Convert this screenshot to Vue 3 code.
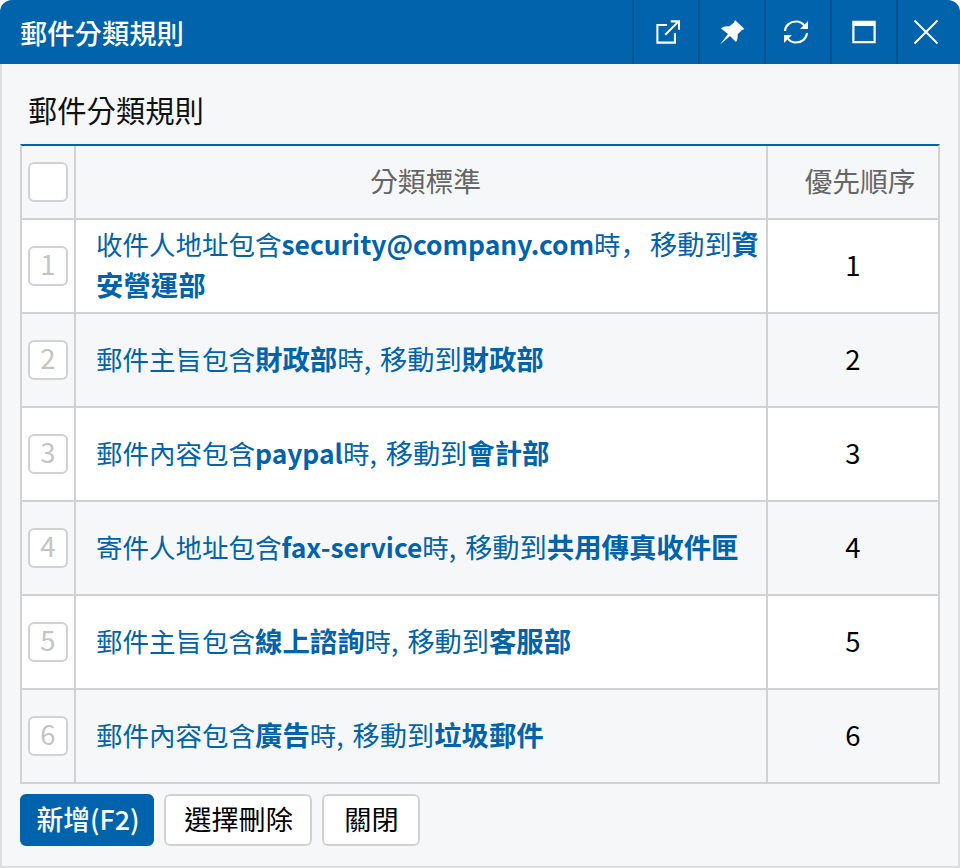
<template>
  <div class="window">
    <header class="titlebar">
      <h1 class="title">郵件分類規則</h1>
      <div class="tools">
        <button class="tool">
          <svg class="nudge-r" viewBox="0 0 26 26" width="24" height="24" fill="none" stroke="#fff" stroke-width="2.2">
            <path d="M12 5.500H1.500v19h19V14" />
            <path d="M10 16 24.500 1.500M16 1.500h9v9" />
          </svg>
        </button>
        <button class="tool">
          <svg viewBox="0 0 26 26" width="26" height="26" fill="#fff">
            <path d="M16 1 25.500 10 23 11 18.500 15.500C19 18 18.500 21 17 23L11 17 1 25.500 9 15 2 9.500C4 8 7 7 10 7.500L15 3.500Z" />
          </svg>
        </button>
        <button class="tool">
          <svg class="nudge-l" viewBox="0 0 26 26" width="26" height="26" fill="none" stroke="#fff" stroke-width="2.2">
            <path d="M2 12C2.500 6.500 7 2.500 13 2.500c3.500 0 6.500 1.500 8.500 4.500" />
            <path d="M24 14c-.5 5.500-5 9.500-11 9.500-3.500 0-6.500-1.500-8.500-4.500" />
            <path d="M25 2v8h-8z" fill="#fff" stroke="none" />
            <path d="M1 24v-8h8z" fill="#fff" stroke="none" />
          </svg>
        </button>
        <button class="tool">
          <svg viewBox="0 0 26 26" width="24" height="24" fill="none" stroke="#fff" stroke-width="2.400">
            <path d="M1.500 2h23v22h-23z" />
            <path d="M1 4.500h24" stroke-width="4" />
          </svg>
        </button>
        <button class="tool last">
          <svg viewBox="0 0 26 26" width="26" height="26" fill="none" stroke="#fff" stroke-width="2">
            <path d="M1.500 1.500 24.500 24.500M24.500 1.500 1.500 24.500" />
          </svg>
        </button>
      </div>
    </header>

    <main class="body">
      <h2 class="heading">郵件分類規則</h2>
      <div class="grid">
        <div class="row head">
          <div class="cell check"><span class="box"></span></div>
          <div class="cell rule">分類標準</div>
          <div class="cell order">優先順序</div>
        </div>
        <div v-for="(r, idx) in rules" :key="idx" class="row" :class="{ odd: idx % 2 === 1 }">
          <div class="cell check"><span class="box">{{ idx + 1 }}</span></div>
          <div class="cell rule">
            <a class="link">{{ r.field }}<b :class="{ latin: r.latin }">{{ r.word }}</b>時<span class="sep" :class="{ full: idx === 0 }">{{ idx === 0 ? '， ' : ', ' }}</span><span class="to">移動到</span><b>{{ r.folder }}</b></a>
          </div>
          <div class="cell order">{{ idx + 1 }}</div>
        </div>
      </div>
      <div class="actions">
        <button class="btn primary">新增(F2)</button>
        <button class="btn">選擇刪除</button>
        <button class="btn">關閉</button>
      </div>
    </main>
  </div>
</template>

<script setup>
const rules = [
  { field: '收件人地址包含', word: 'security@company.com', latin: true, folder: '資安營運部' },
  { field: '郵件主旨包含', word: '財政部', folder: '財政部' },
  { field: '郵件內容包含', word: 'paypal', latin: true, folder: '會計部' },
  { field: '寄件人地址包含', word: 'fax-service', latin: true, folder: '共用傳真收件匣' },
  { field: '郵件主旨包含', word: '線上諮詢', folder: '客服部' },
  { field: '郵件內容包含', word: '廣告', folder: '垃圾郵件' },
]
</script>

<style>
html, body { margin: 0; background: #fff; }
</style>

<style scoped>
.window {
  width: 960px;
  height: 868px;
  box-sizing: border-box;
  display: flex;
  flex-direction: column;
  background: #f6f7f9;
  border-radius: 12px 12px 0 0;
  overflow: hidden;
  font-family: "Noto Sans CJK TC", "Noto Sans", sans-serif;
  font-size: 27.5px;
  color: #000;
}

.titlebar {
  height: 64px;
  flex: none;
  display: flex;
  justify-content: space-between;
  background: #0063ac;
  color: #fff;
}

.title {
  margin: 0;
  padding-left: 20px;
  font-size: 27.3px;
  font-weight: 500;
  line-height: 64px;
}

.tools { display: flex; }

.tool {
  width: 66px;
  height: 64px;
  padding: 0;
  display: flex;
  align-items: center;
  justify-content: center;
  background: none;
  border: 0;
  border-left: 2px solid #00548f;
}

.tool.last { width: 64px; padding-right: 6px; }
.nudge-r { margin-left: 4px; }
.nudge-l { margin-right: 4px; }

.body {
  flex: 1;
  padding: 0 18px;
  border: 2px solid #dcdee0;
  border-top: 0;
  display: flex;
  flex-direction: column;
  box-sizing: border-box;
}

.heading {
  margin: 0;
  height: 80px;
  padding-left: 8px;
  font-size: 29.3px;
  font-weight: 400;
  line-height: 90px;
  color: #111;
}

.grid {
  border-top: 2px solid #0063ac;
  border-left: 2px solid #d2d2d2;
  border-right: 2px solid #d2d2d2;
}

.row {
  display: grid;
  grid-template-columns: 52px 694px 170px;
  height: 94px;
  background: #fff;
  border-bottom: 2px solid #d2d2d2;
  box-sizing: border-box;
}

.row.odd, .row.head { background: #f6f7f9; }
.row.head { height: 74px; color: #666; font-size: 27.8px; }

.cell {
  display: flex;
  align-items: center;
  min-width: 0;
}

.check { padding-left: 6px; }

.box {
  width: 40px;
  height: 40px;
  box-sizing: border-box;
  display: flex;
  align-items: center;
  justify-content: center;
  padding-bottom: 4px;
  background: #fff;
  border: 2px solid #d2d2d2;
  border-radius: 6px;
  color: #c4c4c4;
  line-height: 1;
}

.rule {
  border-left: 2px solid #d2d2d2;
  border-right: 2px solid #d2d2d2;
  padding: 0 4px 4px 20px;
  line-height: 40px;
}

.head .rule { justify-content: center; padding: 0 0 4px 9px; }
.order { justify-content: center; padding-bottom: 4px; }
.head .order { padding-left: 14px; }

.link { color: #0063ac; font-size: 26.5px; }
.link b { font-weight: 700; font-size: 27.4px; }
.link b.latin { font-size: 26.4px; }
.to { font-size: 27.2px; }
.sep { word-spacing: 3px; }
.sep.full { font-family: "Noto Sans CJK JP", sans-serif; word-spacing: -3px; }

.actions {
  display: flex;
  gap: 10px;
  margin-top: 10px;
}

.btn {
  height: 52px;
  min-width: 98px;
  padding: 0 17px 4px 18.200px;
  background: #fff;
  border: 2px solid #d2d2d2;
  border-radius: 6px;
  font: inherit;
  font-size: 27.2px;
  color: #000;
}

.btn.primary {
  width: 134px;
  padding: 0 0 4px 2px;
  font-size: 26.8px;
  font-weight: 500;
  background: #0063ac;
  border-color: #0063ac;
  color: #fff;
}
</style>
